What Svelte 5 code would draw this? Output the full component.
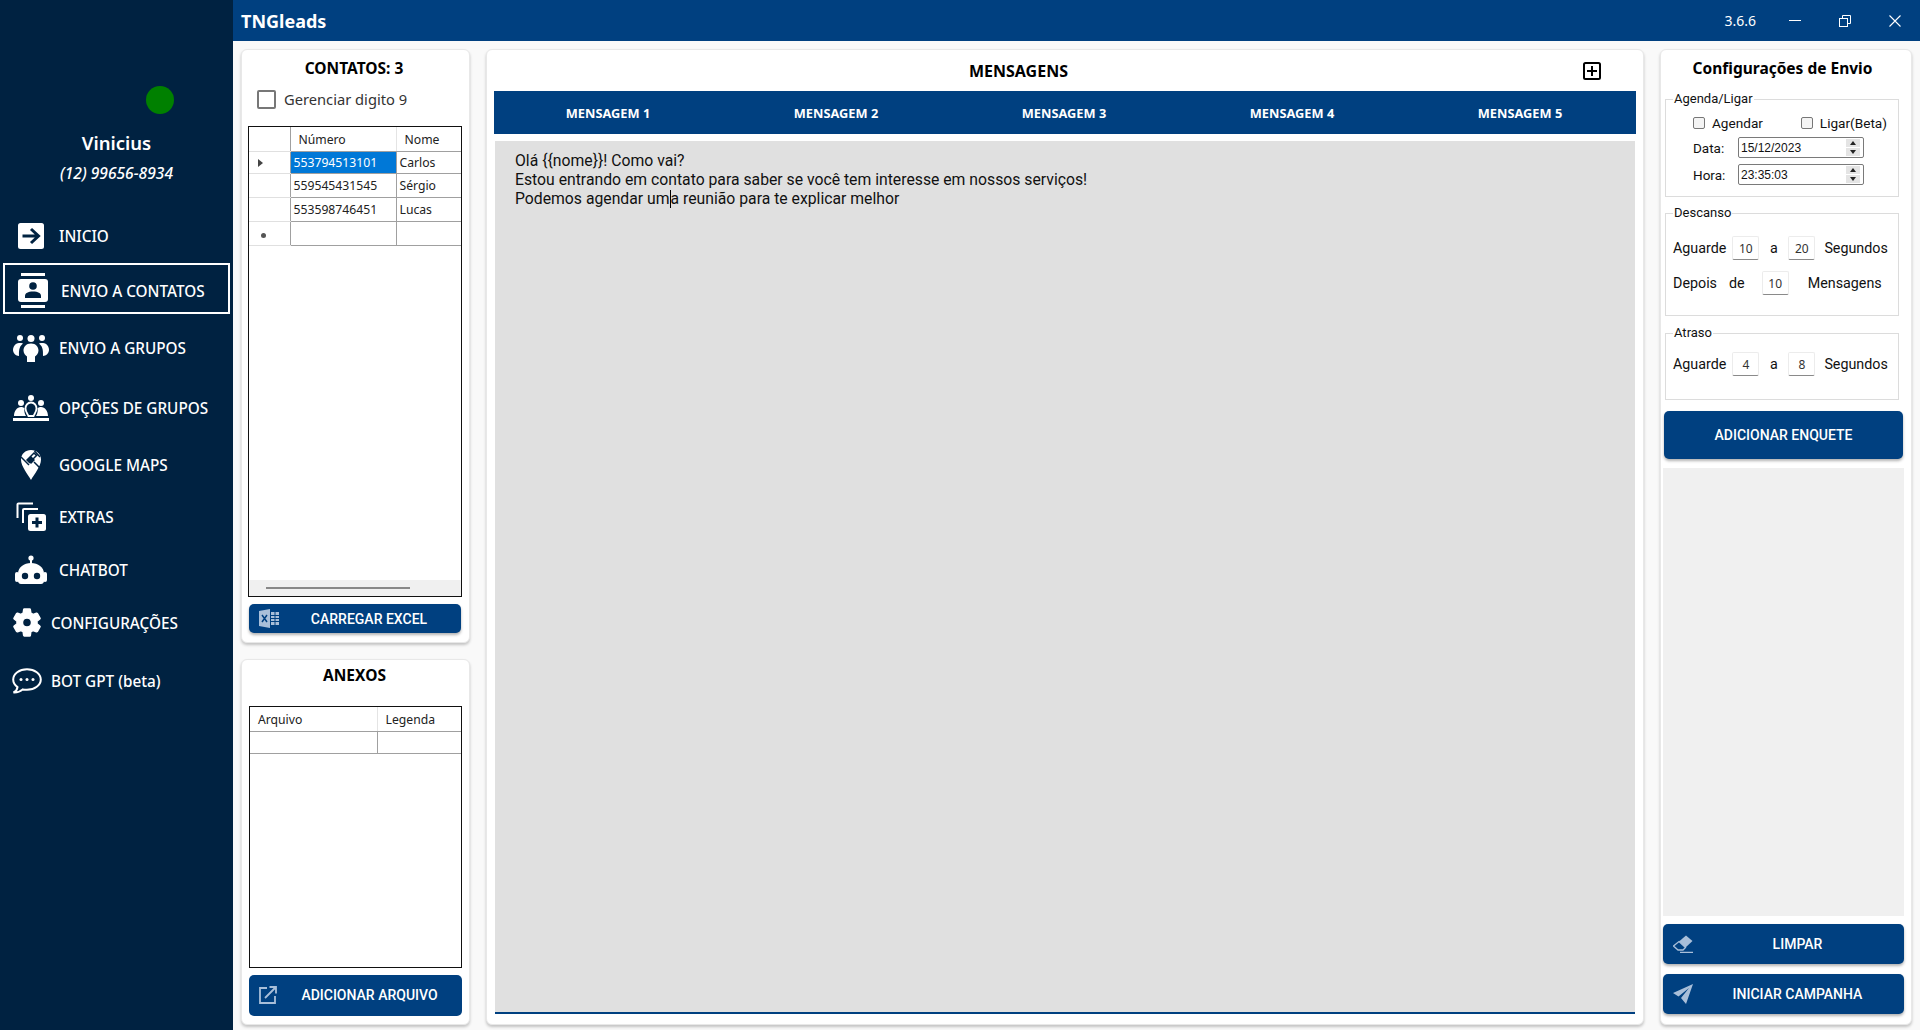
<script>
  const tabs = ['MENSAGEM 1', 'MENSAGEM 2', 'MENSAGEM 3', 'MENSAGEM 4', 'MENSAGEM 5'];
  const contacts = [
    { numero: '553794513101', nome: 'Carlos' },
    { numero: '559545431545', nome: 'Sérgio' },
    { numero: '553598746451', nome: 'Lucas' }
  ];
</script>

<div class="app">
  <aside class="side">
    <div class="profile">
      <span class="dot"></span>
      <div class="name">Vinicius</div>
      <div class="phone">(12) 99656-8934</div>
    </div>
    <nav class="nav">
      <a class="item">
        <span class="ico"><svg width="26" height="26" viewBox="0 0 26 26"><rect width="26" height="26" rx="2.5" fill="#fff"/><path d="M4.5 13h15M13 6l7.5 7-7.5 7" fill="none" stroke="#002241" stroke-width="3"/></svg></span>
        INICIO
      </a>
      <a class="item active">
        <span class="ico"><svg width="30" height="35" viewBox="0 0 30 35"><rect x="3" y="0" width="24" height="3" fill="#fff"/><rect x="3" y="32" width="24" height="3" fill="#fff"/><rect x="0" y="6" width="30" height="23" rx="3" fill="#fff"/><circle cx="15" cy="13" r="3.8" fill="#002241"/><path d="M7 25v-2c0-3 3-4.500 8-4.500s8 1.500 8 4.500v2z" fill="#002241"/></svg></span>
        ENVIO A CONTATOS
      </a>
      <a class="item">
        <span class="ico"><svg width="36" height="27" viewBox="0 0 36 27" fill="#fff"><circle cx="7" cy="3" r="3"/><circle cx="18" cy="3.500" r="3.500"/><circle cx="29" cy="3" r="3"/><path d="M6 8C2 8 0 12 0 15c0 3 3 6 6 6 0-4-.5-9 4-12.500C9 8 8 8 6 8z"/><path d="M30 8c4 0 6 4 6 7 0 3-3 6-6 6 0-4 .5-9-4-12.500 1-.5 2-.5 4-.5z"/><path d="M18 8.500c-5 0-7.500 3.500-7.500 7 0 3 2 5 3.500 6v5.500h8V21.500c1.500-1 3.500-3 3.500-6 0-3.500-2.500-7-7.500-7z"/></svg></span>
        ENVIO A GRUPOS
      </a>
      <a class="item">
        <span class="ico"><svg width="36" height="26" viewBox="0 0 36 26" fill="#fff"><circle cx="18" cy="3" r="3"/><circle cx="8" cy="8" r="3"/><circle cx="28" cy="8" r="3"/><rect y="23" width="36" height="3"/><path d="M1 21c0-5 3-9 7-9 1.500 0 3 .5 3.500 1.500-.5 2.500 0 5 1.500 7.500z"/><path d="M35 21c0-5-3-9-7-9-1.500 0-3 .5-3.500 1.500.5 2.500 0 5-1.500 7.500z"/><path d="M18 7.500c-3.500 0-5.500 3-5.500 6s2 5.500 3 7.500h5c1-2 3-4.500 3-7.500s-2-6-5.500-6z" fill="none" stroke="#fff" stroke-width="1.800"/></svg></span>
        OPÇÕES DE GRUPOS
      </a>
      <a class="item">
        <span class="ico"><svg width="20" height="30" viewBox="0 0 20 30"><path d="M10 0C4.500 0 0 4 0 9.500c0 7 7 15 10 20.500 3-5.500 10-13.500 10-20.500C20 4 15.500 0 10 0z" fill="#fff"/><path d="M6 10l7-7 2.500 2.500-7 7zM0 7l8 8M13 12l5.500 5.500M13.500 1L19 7" stroke="#002241" stroke-width="1.500" fill="none"/><path d="M6 10l4-4 4 4-4 4z" fill="#002241"/></svg></span>
        GOOGLE MAPS
      </a>
      <a class="item">
        <span class="ico"><svg width="30" height="29" viewBox="0 0 30 29"><path d="M1.500 16V2.500a1 1 0 0 1 1-1H17" fill="none" stroke="#fff" stroke-width="2"/><path d="M7 21V8a1 1 0 0 1 1-1h14" fill="none" stroke="#fff" stroke-width="2"/><rect x="12" y="12" width="18" height="17" rx="2.500" fill="#fff"/><path d="M21 15.500v10M16 20.500h10" stroke="#002241" stroke-width="3"/></svg></span>
        EXTRAS
      </a>
      <a class="item">
        <span class="ico"><svg width="32" height="29" viewBox="0 0 32 29"><circle cx="16" cy="3" r="2.600" fill="#fff"/><rect x="15" y="4" width="2" height="5" fill="#fff"/><path d="M3 26v-7C3 12 9 8 16 8s13 4 13 11v7c0 1.500-1 3-3 3H6c-2 0-3-1.500-3-3z" fill="#fff"/><rect y="17" width="4" height="10" rx="2" fill="#fff"/><rect x="28" y="17" width="4" height="10" rx="2" fill="#fff"/><circle cx="10" cy="21" r="3.200" fill="#002241"/><circle cx="22" cy="21" r="3.200" fill="#002241"/></svg></span>
        CHATBOT
      </a>
      <a class="item tight">
        <span class="ico"><svg width="28" height="29" viewBox="2 2 20 20"><path fill="#fff" fill-rule="evenodd" stroke="#fff" stroke-width="1" d="M19.140 12.940c.04-.3.06-.61.06-.94 0-.32-.02-.64-.07-.94l2.030-1.580c.18-.14.23-.41.12-.61l-1.920-3.320c-.12-.22-.37-.29-.59-.22l-2.390.96c-.5-.38-1.030-.7-1.620-.94l-.36-2.540c-.04-.24-.24-.41-.48-.41h-3.840c-.24 0-.43.17-.47.41l-.36 2.540c-.59.24-1.130.57-1.620.94l-2.390-.96c-.22-.08-.47 0-.59.22L2.740 8.870c-.12.21-.08.47.12.61l2.030 1.580c-.05.3-.09.63-.09.94s.02.64.07.94l-2.030 1.580c-.18.14-.23.41-.12.61l1.920 3.320c.12.22.37.29.59.22l2.390-.96c.5.38 1.030.7 1.620.94l.36 2.540c.05.24.24.41.48.41h3.840c.24 0 .44-.17.47-.41l.36-2.540c.59-.24 1.130-.56 1.620-.94l2.390.96c.22.08.47 0 .59-.22l1.920-3.320c.12-.22.07-.47-.12-.61l-2.010-1.580zM12 15.200c-1.760 0-3.200-1.440-3.200-3.200s1.440-3.200 3.200-3.200 3.200 1.440 3.200 3.200-1.440 3.200-3.200 3.200z"/></svg></span>
        CONFIGURAÇÕES
      </a>
      <a class="item tight">
        <span class="ico"><svg width="30" height="26" viewBox="0 0 30 26"><path d="M15 1.200C7.300 1.200 1.200 5.800 1.200 11.500c0 3 1.700 5.700 4.300 7.600-.3 2.200-1.500 4.200-4 5.400 3.700.2 7-1 9.200-3.100 1.400.3 2.800.4 4.300.4 7.700 0 13.800-4.600 13.800-10.300S22.700 1.200 15 1.200z" fill="none" stroke="#fff" stroke-width="2"/><circle cx="9" cy="11.500" r="1.500" fill="#fff"/><circle cx="15" cy="11.500" r="1.500" fill="#fff"/><circle cx="21" cy="11.500" r="1.500" fill="#fff"/></svg></span>
        BOT GPT (beta)
      </a>
    </nav>
  </aside>

  <div class="main">
    <header class="titlebar">
      <span class="brand">TNGleads</span>
      <span class="version">3.6.6</span>
      <div class="winctl">
        <svg width="12" height="12" viewBox="0 0 12 12"><path d="M0 5.500h12" stroke="#fff"/></svg>
        <svg width="12" height="12" viewBox="0 0 12 12" fill="none" stroke="#fff"><rect x=".5" y="3.500" width="8" height="8"/><path d="M3.500 3.500v-3h8v8h-3"/></svg>
        <svg width="12" height="12" viewBox="0 0 12 12"><path d="M.5.500l11 11M11.500.500l-11 11" stroke="#fff" stroke-width="1.100"/></svg>
      </div>
    </header>

    <div class="content">
      <div class="left">
        <section class="card contacts">
          <h2 class="title">CONTATOS: 3</h2>
          <label class="digit"><span class="bigcheck"></span>Gerenciar digito 9</label>
          <div class="grid-wrap">
            <table class="grid">
              <thead>
                <tr><th class="rh"></th><th class="c-num">Número</th><th class="c-nome">Nome</th></tr>
              </thead>
              <tbody>
                {#each contacts as c, i}
                  <tr class:first={i === 0}>
                    <td class="rh">{#if i === 0}<span class="tri"></span>{/if}</td>
                    <td class:sel={i === 0}>{c.numero}</td>
                    <td>{c.nome}</td>
                  </tr>
                {/each}
                <tr><td class="rh"><span class="ast"></span></td><td></td><td></td></tr>
              </tbody>
            </table>
            <div class="hscroll"><span class="thumb"></span></div>
          </div>
          <button class="btn small">
            <svg width="20" height="19" viewBox="0 0 20 19"><path d="M0 2l11-2v19L0 17z" fill="#a9bfd9"/><path d="M3 6l5 7M8 6l-5 7" stroke="#004080" stroke-width="1.500"/><path d="M12 3h8v13h-8z" fill="#a9bfd9"/><path d="M12 6.500h8M12 9.500h8M12 12.500h8M16 3v13" stroke="#004080"/></svg>
            <span>CARREGAR EXCEL</span>
          </button>
        </section>

        <section class="card attach">
          <h2 class="title">ANEXOS</h2>
          <div class="grid-wrap files">
            <table class="grid">
              <thead><tr><th class="c-file">Arquivo</th><th>Legenda</th></tr></thead>
              <tbody><tr class="first"><td></td><td></td></tr></tbody>
            </table>
          </div>
          <button class="btn tall">
            <svg width="18" height="18" viewBox="0 0 18 18" fill="none" stroke="#a9bfd9" stroke-width="1.800"><path d="M8 2H1v15h15v-7"/><path d="M6 12L17 1M10.500 1H17v6.500"/></svg>
            <span>ADICIONAR ARQUIVO</span>
          </button>
        </section>
      </div>

      <section class="card messages">
        <div class="msg-head">
          <h2 class="title big">MENSAGENS</h2>
          <span class="plus"><svg width="18" height="18" viewBox="0 0 18 18"><rect x="1" y="1" width="16" height="16" rx="1.500" fill="none" stroke="#000" stroke-width="2"/><path d="M9 4v10M4 9h10" stroke="#000" stroke-width="2"/></svg></span>
        </div>
        <div class="tabs">
          {#each tabs as t}<span class="tab">{t}</span>{/each}
        </div>
        <div class="editor">
          <p>Olá &#123;&#123;nome&#125;&#125;! Como vai?</p>
          <p>Estou entrando em contato para saber se você tem interesse em nossos serviços!</p>
          <p>Podemos agendar um<span class="caret"></span>a reunião para te explicar melhor</p>
        </div>
      </section>

      <section class="card config">
        <h2 class="title">Configurações de Envio</h2>

        <fieldset class="group g1">
          <legend>Agenda/Ligar</legend>
          <div class="checks">
            <label><span class="check"></span>Agendar</label>
            <label><span class="check"></span>Ligar(Beta)</label>
          </div>
          <div class="dt">
            <span class="dt-label">Data:</span>
            <div class="picker"><span>15/12/2023</span><span class="spin"><i class="up"></i><i class="down"></i></span></div>
          </div>
          <div class="dt">
            <span class="dt-label">Hora:</span>
            <div class="picker"><span>23:35:03</span><span class="spin"><i class="up"></i><i class="down"></i></span></div>
          </div>
        </fieldset>

        <fieldset class="group g2">
          <legend>Descanso</legend>
          <div class="row">
            <span class="lbl">Aguarde</span><span class="num">10</span><span class="a">a</span><span class="num">20</span><span class="unit">Segundos</span>
          </div>
          <div class="row second">
            <span>Depois</span><span class="de">de</span><span class="num">10</span><span class="msgs">Mensagens</span>
          </div>
        </fieldset>

        <fieldset class="group g3">
          <legend>Atraso</legend>
          <div class="row">
            <span class="lbl">Aguarde</span><span class="num">4</span><span class="a">a</span><span class="num">8</span><span class="unit">Segundos</span>
          </div>
        </fieldset>

        <button class="btn enquete"><span>ADICIONAR ENQUETE</span></button>
        <div class="panel"></div>
        <button class="btn action">
          <svg width="20" height="18" viewBox="0 0 20 18"><path d="M13 .5l6.500 5.500-7 6.500L6 6.500z" fill="#a9bfd9"/><path d="M6 6.500l6.500 6L10 15H5l-4.500-4z" fill="none" stroke="#a9bfd9" stroke-width="1.300"/><path d="M7 17.400h13" stroke="#a9bfd9" stroke-width="1.300"/></svg>
          <span>LIMPAR</span>
        </button>
        <button class="btn action last">
          <svg width="20" height="20" viewBox="0 0 20 20"><path d="M20 0L0 9l5.500 3.500L16 4 8 14l5 6z" fill="#a9bfd9"/></svg>
          <span>INICIAR CAMPANHA</span>
        </button>
      </section>
    </div>
  </div>
</div>

<style>
  :global(body) {
    margin: 0;
    background: #f9f9f9;
    font-family: "Noto Sans", sans-serif;
  }

  .app {
    display: flex;
    height: 1030px;
    overflow: hidden;
  }

  /* Sidebar */
  .side {
    width: 233px;
    flex: none;
    background: #002241;
    color: #fff;
  }

  .profile {
    height: 207px;
    padding-top: 86px;
    box-sizing: border-box;
  }

  .dot {
    display: block;
    width: 28px;
    height: 28px;
    margin-left: 146px;
    border-radius: 50%;
    background: #008000;
  }

  .name {
    margin-top: 16px;
    text-align: center;
    font-size: 18.500px;
    font-weight: 600;
    line-height: 26px;
  }

  .phone {
    margin-top: 7px;
    text-align: center;
    font-size: 15.600px;
    font-style: italic;
    font-weight: 500;
    line-height: 20px;
  }

  .nav {
    display: grid;
    grid-template-rows: 56px 51px 67px 52px 62px 42px 64px 42px 74px;
  }

  .item {
    display: flex;
    align-items: center;
    padding-top: 1px;
    font-size: 15.300px;
    font-weight: 500;
    white-space: nowrap;
  }

  .ico {
    width: 36px;
    margin: 0 10px 0 13px;
    display: flex;
    justify-content: center;
    flex: none;
  }

  .item.active {
    margin: 0 3px;
    padding-top: 4px;
    border: 2px solid #fff;
    box-sizing: border-box;
  }

  .item.active .ico {
    margin: 0 10px 0 10px;
  }

  .item.tight .ico {
    width: 30px;
    margin: 0 9px 0 12px;
  }

  /* Title bar */
  .main {
    flex: 1;
    display: flex;
    flex-direction: column;
    min-width: 0;
  }

  .titlebar {
    height: 41px;
    flex: none;
    display: flex;
    align-items: center;
    padding-left: 8px;
    background: #004080;
    color: #fff;
  }

  .brand {
    font-size: 18px;
    font-weight: 700;
  }

  .version {
    margin-left: auto;
    font-size: 14px;
  }

  .winctl {
    display: flex;
    gap: 38px;
    margin: 0 19px 0 33px;
    align-items: center;
  }

  /* Cards */
  .content {
    flex: 1;
    display: flex;
    gap: 16px;
    padding: 8px 8px 5px;
    min-height: 0;
  }

  .card {
    background: #fff;
    border: 1px solid #e8e8e8;
    border-radius: 6px;
    box-shadow: 0 2px 3px rgba(0, 0, 0, 0.22);
    box-sizing: border-box;
    display: flex;
    flex-direction: column;
  }

  .title {
    margin: 0;
    font-size: 15.500px;
    font-weight: 700;
    line-height: 20px;
    text-align: center;
    color: #000;
  }

  .left .title {
    padding-right: 2px;
  }

  .title.big {
    font-size: 16px;
  }

  .left {
    width: 229px;
    flex: none;
    display: flex;
    flex-direction: column;
    gap: 16px;
  }

  .contacts {
    height: 594px;
    padding: 8px 7px 0 6px;
  }

  .attach {
    flex: 1;
    padding: 5px 7px 0;
  }

  .digit {
    display: flex;
    align-items: center;
    gap: 8px;
    margin: 11px 0 0 9px;
    height: 20px;
    font-size: 14.700px;
    color: #333;
  }

  .bigcheck {
    width: 15px;
    height: 15px;
    border: 2px solid #777;
    border-radius: 2px;
  }

  .grid-wrap {
    flex: none;
    position: relative;
    height: 471px;
    margin-top: 17px;
    border: 1.500px solid #111;
    box-sizing: border-box;
    background: #fff;
  }

  .files {
    height: 262px;
    margin-top: 21px;
  }

  .grid {
    width: 100%;
    border-collapse: collapse;
    table-layout: fixed;
    font-size: 12.200px;
    color: #222;
  }

  .grid th,
  .grid td {
    box-sizing: border-box;
  }

  .grid th {
    height: 24px;
    padding: 2px 0 0 8px;
    font-weight: 400;
    text-align: left;
    border-right: 1px solid #e4e4e4;
    border-bottom: 1px solid #a0a0a0;
  }

  .grid td {
    height: 24px;
    padding: 1px 0 0 3px;
    border-right: 1px solid #a0a0a0;
    border-bottom: 1px solid #a0a0a0;
  }

  .grid .first td {
    height: 22px;
  }

  .grid th:last-child,
  .grid td:last-child {
    border-right: 0;
  }

  .grid .rh {
    width: 41px;
    padding: 0;
    text-align: center;
    border-bottom-color: #e0e0e0;
    border-right-color: #a0a0a0;
  }

  .c-num {
    width: 106px;
  }

  .c-file {
    width: 127px;
  }

  .grid td.sel {
    background: #0078d7;
    color: #fff;
  }

  .tri {
    display: inline-block;
    margin-right: 18px;
    border-left: 5px solid #444;
    border-top: 4px solid transparent;
    border-bottom: 4px solid transparent;
  }

  .ast {
    display: inline-block;
    width: 5px;
    height: 5px;
    margin-right: 12px;
    border-radius: 50%;
    background: #555;
  }

  .hscroll {
    position: absolute;
    left: 0;
    right: 0;
    bottom: 0;
    height: 16px;
    background: #f0f0f0;
  }

  .thumb {
    position: absolute;
    left: 17px;
    top: 7px;
    width: 144px;
    height: 2px;
    background: #888;
  }

  /* Buttons */
  .btn {
    display: grid;
    grid-template-columns: 44px 1fr 16px;
    align-items: center;
    justify-items: center;
    border: 0;
    padding: 0;
    background: #004080;
    color: #fff;
    border-radius: 5px;
    font-family: Roboto, sans-serif;
    font-size: 14px;
    font-weight: 500;
    box-shadow: 0 2px 3px rgba(0, 0, 0, 0.3);
  }

  .btn svg {
    grid-column: 1;
    justify-self: start;
    margin-left: 10px;
  }

  .btn span {
    grid-column: 2;
  }

  .small {
    height: 29px;
    margin: 7px 1px 0 1px;
  }

  .tall {
    height: 41px;
    margin: 7px 0 0;
    padding-bottom: 2px;
    box-shadow: none;
  }

  /* Messages */
  .messages {
    flex: 1;
    padding: 0 7px;
  }

  .msg-head {
    height: 40px;
    flex: none;
    display: flex;
    align-items: center;
    justify-content: space-between;
    padding: 1px 35px 0 475px;
  }

  .plus {
    display: flex;
  }

  .tabs {
    height: 43px;
    flex: none;
    display: grid;
    grid-template-columns: repeat(5, 1fr);
    align-items: center;
    padding-right: 2px;
    background: #004080;
    color: #fff;
    font-size: 12.800px;
    font-weight: 700;
    text-align: center;
  }

  .editor {
    flex: 1;
    margin: 7px 1px 10px;
    padding: 10px 20px;
    background: #e0e0e0;
    border-bottom: 2px solid #004080;
    font-family: Roboto, sans-serif;
    font-size: 15.750px;
    line-height: 19px;
    color: #111;
  }

  .editor p {
    margin: 0;
  }

  .caret {
    display: inline-block;
    width: 0;
    height: 18px;
    margin-bottom: -4px;
    border-left: 1px solid #000;
  }

  /* Config */
  .config {
    width: 252px;
    flex: none;
    padding: 8px 7px 10px 2px;
    font-family: Roboto, sans-serif;
    font-size: 14.300px;
    color: #111;
  }

  .config .title {
    font-family: "Noto Sans", sans-serif;
    padding-right: 2px;
  }

  .group {
    flex: none;
    margin: 0 5px 0 2px;
    padding: 0;
    border: 1px solid #dcdcdc;
    box-sizing: border-box;
  }

  .group legend {
    margin-left: 7px;
    padding: 0 1px;
    font-size: 13px;
    line-height: 16px;
  }

  .g1 {
    height: 106px;
    margin-top: 13px;
  }

  .g2 {
    height: 111px;
    margin-top: 8px;
  }

  .g3 {
    height: 75px;
    margin-top: 9px;
  }

  .checks {
    display: flex;
    justify-content: space-between;
    padding: 8px 11px 0 27px;
    font-size: 13.600px;
  }

  .checks label {
    display: flex;
    align-items: center;
    gap: 7px;
  }

  .check {
    width: 10px;
    height: 10px;
    border: 1px solid #777;
    border-radius: 2px;
    background: #f4f4f4;
  }

  .dt {
    display: flex;
    align-items: center;
    margin: 6px 0 0 27px;
  }

  .dt-label {
    width: 45px;
    font-size: 13.500px;
  }

  .picker {
    width: 126px;
    height: 21px;
    display: flex;
    align-items: center;
    justify-content: space-between;
    padding: 0 3px 0 2px;
    box-sizing: border-box;
    border: 1px solid #7a7a7a;
    border-radius: 2px;
    font-family: "Liberation Sans", sans-serif;
    font-size: 12px;
  }

  .spin {
    width: 14px;
    height: 17px;
    display: flex;
    flex-direction: column;
    gap: 1px;
  }

  .spin i {
    flex: 1;
    display: flex;
    align-items: center;
    justify-content: center;
    background: #e4e4e4;
  }

  .spin i::after {
    content: '';
    border-left: 3px solid transparent;
    border-right: 3px solid transparent;
  }

  .up::after {
    border-bottom: 4px solid #222;
  }

  .down::after {
    border-top: 4px solid #222;
  }

  .row {
    display: flex;
    align-items: center;
    margin: 15px 0 0 7px;
  }

  .row.second {
    margin-top: 11px;
  }

  .g3 .row {
    margin-top: 11px;
  }

  .lbl {
    margin-right: 6px;
  }

  .num {
    width: 27px;
    height: 24px;
    flex: none;
    display: flex;
    align-items: center;
    justify-content: center;
    box-sizing: border-box;
    border: 1px solid #ececec;
    border-bottom-color: #8a8a8a;
    border-radius: 2px;
    font-family: "Noto Sans", sans-serif;
    font-size: 12px;
    color: #333;
  }

  .a {
    width: 29px;
    text-align: center;
  }

  .unit {
    margin-left: 9px;
  }

  .de {
    margin: 0 17px 0 12px;
  }

  .msgs {
    margin-left: 19px;
  }

  .enquete {
    flex: none;
    display: flex;
    justify-content: center;
    height: 48px;
    margin: 11px 1px 0 1px;
  }

  .panel {
    flex: 1;
    margin-top: 9px;
    background: #f0f0f0;
  }

  .action {
    flex: none;
    height: 40px;
    margin-top: 8px;
  }

  .action.last {
    margin-top: 10px;
  }
</style>
